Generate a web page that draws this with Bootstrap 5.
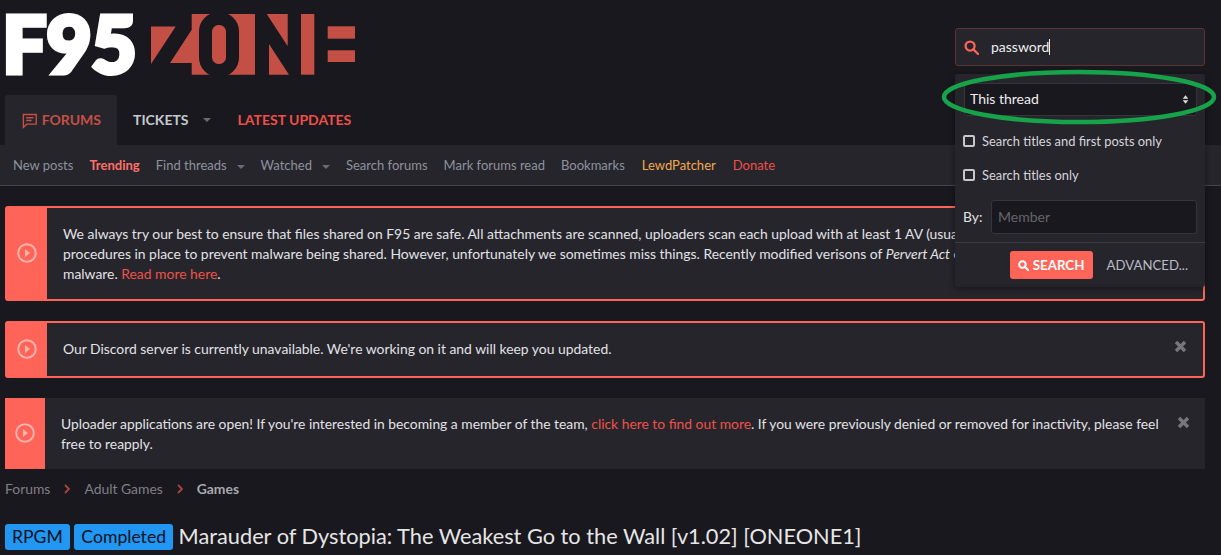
<!doctype html>
<html lang="en">
<head>
<meta charset="utf-8">
<meta name="viewport" content="width=device-width, initial-scale=1">
<title>F95 Zone</title>
<link href="https://cdn.jsdelivr.net/npm/bootstrap@5.3.3/dist/css/bootstrap.min.css" rel="stylesheet">
<style>
body { background: #19181e; color: #e2e2e6; font-family: Lato, "Liberation Sans", sans-serif; font-size: 13.9px; line-height: 20px; overflow: hidden; height: 555px; }
a { text-decoration: none; }
.site-head { height: 95px; padding: 0 16px 0 0; }
.site-logo { display: block; margin-top: 0; }
.logo-f95 { font-family: Lato, sans-serif; font-weight: 900; font-size: 79px; fill: #fff; stroke: #fff; stroke-width: 5px; stroke-linejoin: miter; }
.search-box { width: 250px; height: 38px; margin-top: 28px; background: #26252c; border: 1px solid #5a3532; border-radius: 3px; padding: 0 8px; gap: 12px; color: #eee; font-size: 14px; }
.caret-line { display: inline-block; width: 1px; height: 16px; background: #eee; vertical-align: -3px; }
.search-menu { position: absolute; top: 74px; left: 955px; width: 250px; height: 213px; background: #26252c; border-radius: 3px; box-shadow: 0 2px 6px rgba(0,0,0,.4); z-index: 5; font-size: 12.9px; }
.search-menu .form-select { flex-shrink: 0; height: 33px; margin: 9px 8px 0 9px; width: 233px; background-color: #19181e; border: 1px solid #36353c; color: #eee; border-radius: 3px; padding: 0 5px 2px; font-size: 14px; background-size: 7px 11px; background-position: right 7px center; background-image: url("data:image/svg+xml,%3Csvg xmlns='http://www.w3.org/2000/svg' viewBox='0 0 10 14'%3E%3Cpath fill='%23ddd' d='M5 1l4 5H1zM5 13L1 8h8z'/%3E%3C/svg%3E"); }
.check-row { gap: 7px; padding-left: 8px; color: #d6d6da; flex-shrink: 0; }
.check-first { margin-top: 15px; }
.check-next { margin-top: 14px; }
.check-row .form-check-input { width: 12px; height: 12px; margin: 0; background-color: transparent; border: 2px solid #c8c8cc; border-radius: 2px; }
.by-row { margin-top: 15px; padding: 0 8px; flex-shrink: 0; font-size: 13.85px; }
.by-input { width: 206px; height: 34px; background: #19181e; border: 1px solid #36353c; border-radius: 3px; color: #eee; font-size: 14px; padding: 0 6px 2px; }
.by-input::placeholder { color: #66656b; opacity: 1; }
.menu-foot { border-top: 1px solid #3c3b42; height: 45px; padding-top: 8px; margin-top: 8px; flex-shrink: 0; }
.btn-hot { background: #ff6459; color: #fff; font-size: 13.3px; font-weight: 700; height: 28px; width: 83px; padding: 0; border: 0; border-radius: 3px; line-height: 28px; }
.btn-hot:hover { background: #ff6459; color: #fff; }
.adv-link { color: #b8bcc6; font-size: 13.2px; line-height: 28px; margin-left: 14px; margin-right: 17px; }
.tab-row { height: 50px; padding-left: 5px; }
.tab-row .nav-link { font-weight: 700; font-size: 14px; padding: 0 16px; height: 50px; display: flex; align-items: center; color: #c4c8d0; }
.tab-row .nav-link.active { background: #26252c; color: #c44f45; border-radius: 3px 3px 0 0; width: 112px; padding-left: 17px; }
.tab-row .nav-link.hot { color: #ef4f48; }
.tab-row .nav-link.has-drop { padding-right: 11px; }
.drop-arrow { display: inline-block; border: 4px solid transparent; border-top: 4px solid #6b6b72; border-bottom: 0; margin-left: 10px; vertical-align: middle; }
.tab-row .drop-arrow { margin-left: 14px; }
.sub-row { height: 41px; background: #26252c; border-bottom: 1px solid #45444b; padding-left: 13px; gap: 16px; font-size: 13px; }
.sub-row a { color: #8e929c; }
.sub-row .is-hot { color: #ff6f66; font-weight: 700; }
.sub-row .is-gold { color: #f3a94e; margin-left: 1px; }
.sub-row .is-red { color: #ef4f48; margin-left: 1px; }
.notice-gap { height: 20px; }
.notice { background: #26252c; margin: 0 16px 20px 5px; border: 2px solid #ff6459; border-radius: 3px; position: relative; }
.notice-tall { height: 95px; }
.notice-short { height: 57px; }
.notice.plain { border: 0; border-radius: 0; height: 71px; margin-bottom: 10px; }
.notice-side { width: 40px; background: #ff6459; flex-shrink: 0; padding-bottom: 2px; }
.notice-body { padding: 0 40px 0 16px; }
.notice-short .notice-body { padding-bottom: 2px; }
.plain .notice-body { font-size: 13.85px; padding-right: 45px; }
.notice-body a { color: #ef5248; }
.notice-x { position: absolute; right: 16px; top: 17px; }
.plain .notice-x { right: 15px; top: 18px; }
.crumbs { margin: 0 0 0 5px; color: #8a8a90; }
.crumbs a { color: #807f86; }
.crumbs b { color: #a8a8b0; }
.crumb-sep { margin: 0 13px 0 14px; }
.page-title { font-size: 21.75px; line-height: 28px; font-weight: 400; margin: 0 0 0 5px; color: #e6e6e6; padding-top: 23px; }
.tag-blue { background: #2196f3; color: #0b1320; font-size: 17.6px; font-weight: 400; border-radius: 3px; padding: 0 7px; height: 26px; line-height: 26px; display: inline-block; vertical-align: 1px; }
.tag-first { margin-right: -1px; }
.ring-mark { position: absolute; left: 941px; top: 69px; z-index: 6; pointer-events: none; }
</style>
</head>
<body>
<header class="site-head d-flex justify-content-between align-items-start">
  <svg class="site-logo" width="360" height="95" viewBox="0 0 360 95" role="img" aria-label="F95 Zone">
    <text class="logo-f95" x="2.500" y="72.500" textLength="134" lengthAdjust="spacingAndGlyphs">F95</text>
    <g fill="#c44f45">
      <path d="M151 26.500h24.700L151 64z"/>
      <path d="M191.700 14H255v60.700h-63.300V63H170l21.700-33.300z"/>
      <path d="M266.700 14h21v32.300zM269 44l20 30.700h-20z"/>
      <rect x="301" y="14" width="13.300" height="60.700"/>
      <rect x="327.700" y="26.300" width="27.300" height="12.400"/>
      <rect x="327.700" y="50.300" width="27.300" height="11.700"/>
    </g>
    <rect x="205.500" y="18.500" width="27" height="52" rx="13" fill="#c44f45" stroke="#19181e" stroke-width="13"/>
  </svg>
  <div class="search-box d-flex align-items-center">
    <svg width="15" height="15" viewBox="0 0 16 16" fill="none" stroke="#ff6459" stroke-width="2.400"><circle cx="6.500" cy="6.500" r="4.800"/><path d="M10 10l5 5" stroke-linecap="round"/></svg>
    <span>password<span class="caret-line"></span></span>
  </div>
</header>

<form class="search-menu d-flex flex-column">
  <select class="form-select"><option>This thread</option></select>
  <label class="check-row check-first d-flex align-items-center"><input class="form-check-input" type="checkbox"><span>Search titles and first posts only</span></label>
  <label class="check-row check-next d-flex align-items-center"><input class="form-check-input" type="checkbox"><span>Search titles only</span></label>
  <div class="by-row d-flex align-items-center justify-content-between">
    <span>By:</span>
    <input class="by-input" placeholder="Member">
  </div>
  <div class="menu-foot d-flex justify-content-end align-items-start">
    <button type="button" class="btn btn-hot d-flex align-items-center justify-content-center gap-1">
      <svg width="11" height="11" viewBox="0 0 16 16" fill="none" stroke="#fff" stroke-width="3"><circle cx="6.500" cy="6.500" r="4.800"/><path d="M10 10l5 5" stroke-linecap="round"/></svg>SEARCH
    </button>
    <a class="adv-link" href="#">ADVANCED...</a>
  </div>
</form>
<svg class="ring-mark" width="276" height="56" viewBox="0 0 276 56"><ellipse cx="138" cy="28" rx="135" ry="25" fill="none" stroke="#17a349" stroke-width="4.500"/></svg>

<nav class="tab-row nav">
  <a class="nav-link active gap-1" href="#">
    <svg width="17" height="17" viewBox="0 0 17 17" fill="none" stroke="#c44f45" stroke-width="1.500"><path d="M1.500 2h14v10.500H5l-3.500 3.500z"/><path d="M4.500 5.500h8M4.500 8.500h6"/></svg>FORUMS
  </a>
  <a class="nav-link has-drop" href="#">TICKETS<span class="drop-arrow"></span></a>
  <a class="nav-link hot" href="#">LATEST UPDATES</a>
</nav>
<nav class="sub-row d-flex align-items-center">
  <a href="#">New posts</a>
  <a class="is-hot" href="#">Trending</a>
  <a href="#">Find threads<span class="drop-arrow"></span></a>
  <a href="#">Watched<span class="drop-arrow"></span></a>
  <a href="#">Search forums</a>
  <a href="#">Mark forums read</a>
  <a href="#">Bookmarks</a>
  <a class="is-gold" href="#">LewdPatcher</a>
  <a class="is-red" href="#">Donate</a>
</nav>

<div class="notice-gap"></div>

<div class="notice notice-tall d-flex">
  <div class="notice-side d-flex align-items-center justify-content-center">
    <svg width="20" height="20" viewBox="0 0 20 20"><circle cx="10" cy="10" r="8.800" fill="none" stroke="#ffb3ad" stroke-width="2"/><path d="M8 6l5 4-5 4z" fill="#ffb3ad"/></svg>
  </div>
  <div class="notice-body align-self-center text-nowrap">We always try our best to ensure that files shared on F95 are safe. All attachments are scanned, uploaders scan each upload with at least 1 AV (usually VirusTotal), and we have<br>procedures in place to prevent malware being shared. However, unfortunately we sometimes miss things. Recently modified verisons of <em>Pervert Act</em> contained<br>malware. <a href="#">Read more here</a>.</div>
</div>

<div class="notice notice-short d-flex align-items-stretch">
  <div class="notice-side d-flex align-items-center justify-content-center">
    <svg width="20" height="20" viewBox="0 0 20 20"><circle cx="10" cy="10" r="8.800" fill="none" stroke="#ffb3ad" stroke-width="2"/><path d="M8 6l5 4-5 4z" fill="#ffb3ad"/></svg>
  </div>
  <div class="notice-body align-self-center">Our Discord server is currently unavailable. We're working on it and will keep you updated.</div>
  <svg class="notice-x" width="13" height="13" viewBox="0 0 13 13"><path d="M2 2l9 9M11 2l-9 9" stroke="#77767d" stroke-width="3.400"/></svg>
</div>

<div class="notice plain d-flex">
  <div class="notice-side d-flex align-items-center justify-content-center">
    <svg width="20" height="20" viewBox="0 0 20 20"><circle cx="10" cy="10" r="8.800" fill="none" stroke="#ffb3ad" stroke-width="2"/><path d="M8 6l5 4-5 4z" fill="#ffb3ad"/></svg>
  </div>
  <div class="notice-body align-self-center">Uploader applications are open! If you're interested in becoming a member of the team, <a href="#">click here to find out more</a>. If you were previously denied or removed for inactivity, please feel free to reapply.</div>
  <svg class="notice-x" width="13" height="13" viewBox="0 0 13 13"><path d="M2 2l9 9M11 2l-9 9" stroke="#77767d" stroke-width="3.400"/></svg>
</div>

<div class="crumbs d-flex align-items-center">
  <a href="#">Forums</a>
  <svg class="crumb-sep" width="7" height="10" viewBox="0 0 7 10" fill="none" stroke="#a8443c" stroke-width="1.800"><path d="M1 1l4 4-4 4"/></svg>
  <a href="#">Adult Games</a>
  <svg class="crumb-sep" width="7" height="10" viewBox="0 0 7 10" fill="none" stroke="#a8443c" stroke-width="1.800"><path d="M1 1l4 4-4 4"/></svg>
  <b>Games</b>
</div>

<h1 class="page-title"><span class="tag-blue tag-first">RPGM</span> <span class="tag-blue">Completed</span> Marauder of Dystopia: The Weakest Go to the Wall [v1.02] [ONEONE1]</h1>

<script src="https://cdn.jsdelivr.net/npm/bootstrap@5.3.3/dist/js/bootstrap.bundle.min.js"></script>
</body>
</html>
